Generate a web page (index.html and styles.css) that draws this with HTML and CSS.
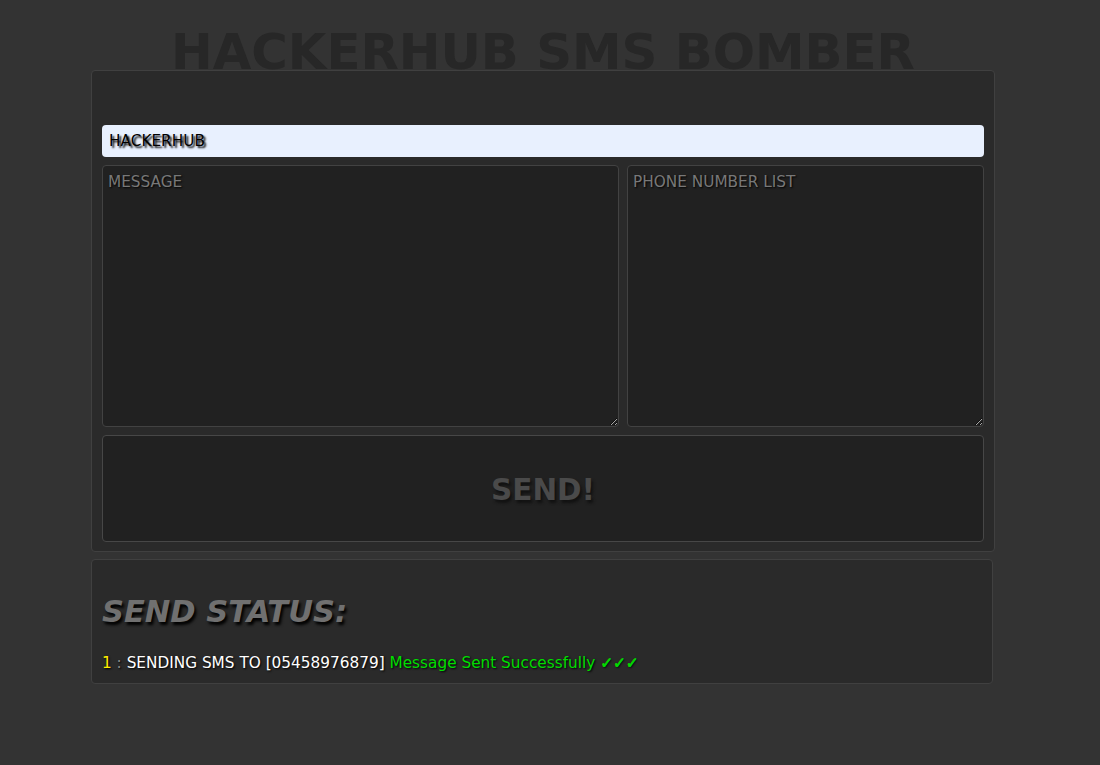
FILE: index.html
```html
<!DOCTYPE html>
<html>
<head>
<meta charset="utf-8">
<link rel="stylesheet" href="styles.css">
</head>
<body>
<h1 class="title">HACKERHUB SMS BOMBER</h1>
<div class="panel form-panel">
  <input class="sender" type="text" value="HACKERHUB">
  <div class="areas">
    <textarea class="area" placeholder="MESSAGE"></textarea>
    <textarea class="area" placeholder="PHONE NUMBER LIST"></textarea>
  </div>
  <button class="send">SEND!</button>
</div>
<div class="panel status-panel">
  <h2 class="status-title">SEND STATUS:</h2>
  <div class="status-line"><span class="num">1</span> <span class="sep">:</span> <span class="txt">SENDING SMS TO [05458976879]</span> <span class="ok">Message Sent Successfully <b class="checks">✓✓✓</b></span></div>
</div>
</body>
</html>
```

FILE: styles.css
```css
html, body {
  margin: 0;
  padding: 0;
  background: #333333;
  font-family: "DejaVu Sans", Verdana, sans-serif;
}
body {
  padding: 0 91px;
  width: 904px;
  box-sizing: content-box;
}
.title {
  margin: 0;
  height: 70px;
  padding-top: 24px;
  box-sizing: border-box;
  text-align: center;
  font-size: 49.8px;
  line-height: 56px;
  font-weight: bold;
  color: #272727;
  white-space: nowrap;
  position: relative;
  z-index: 0;
}
.panel {
  background: #2a2a2a;
  border: 1px solid #404040;
  border-radius: 4px;
  box-sizing: border-box;
  position: relative;
  z-index: 1;
}
.form-panel {
  width: 904px;
  padding: 54px 10px 9px 10px;
  display: flex;
  flex-direction: column;
  gap: 8px;
}
.sender {
  height: 32px;
  border: none;
  border-radius: 4px;
  background: #e8f0fe;
  font-family: "DejaVu Sans", Verdana, sans-serif;
  font-size: 15.3px;
  color: #000;
  padding: 0 7px;
  text-shadow: 2px 2px 2px #000;
  outline: none;
  width: 100%;
  box-sizing: border-box;
}
.areas {
  display: flex;
  gap: 8px;
}
.area {
  height: 262px;
  background: #212121;
  border: 1px solid #424242;
  border-radius: 4px;
  box-sizing: border-box;
  padding: 7px 5px 6px 5px;
  font-family: "DejaVu Sans", Verdana, sans-serif;
  font-size: 15.3px;
  color: #bbb;
  resize: both;
  outline: none;
}
.area:first-child { width: 517px; }
.area:last-child { width: 357px; }
.area::placeholder {
  color: #787878;
  text-shadow: 1px 1px 2px #000;
}
.send {
  height: 107px;
  width: 100%;
  background: #212121;
  border: 1px solid #474747;
  border-radius: 4px;
  font-family: "DejaVu Sans", Verdana, sans-serif;
  font-size: 29.5px;
  font-weight: bold;
  color: #4a4a4a;
  text-shadow: 2px 3px 3px #111;
  padding: 2px 0 0 0;
}
.status-panel {
  width: 902px;
  margin-top: 7px;
  padding: 32px 10px 10px 10px;
}
.status-title {
  margin: 0 0 21px 0;
  font-size: 30.5px;
  line-height: 40px;
  font-style: italic;
  font-weight: bold;
  color: #707070;
  text-shadow: 2px 3px 3px #000;
}
.status-line {
  font-size: 15.3px;
  line-height: 20px;
  text-shadow: 1px 1px 2px #000;
  white-space: nowrap;
}
.num { color: #ffee00; }
.sep { color: #888; }
.txt { color: #ffffff; }
.ok { color: #00dd00; }
.checks {
  font-weight: bold;
  -webkit-text-stroke: 0.7px #00dd00;
}
```
